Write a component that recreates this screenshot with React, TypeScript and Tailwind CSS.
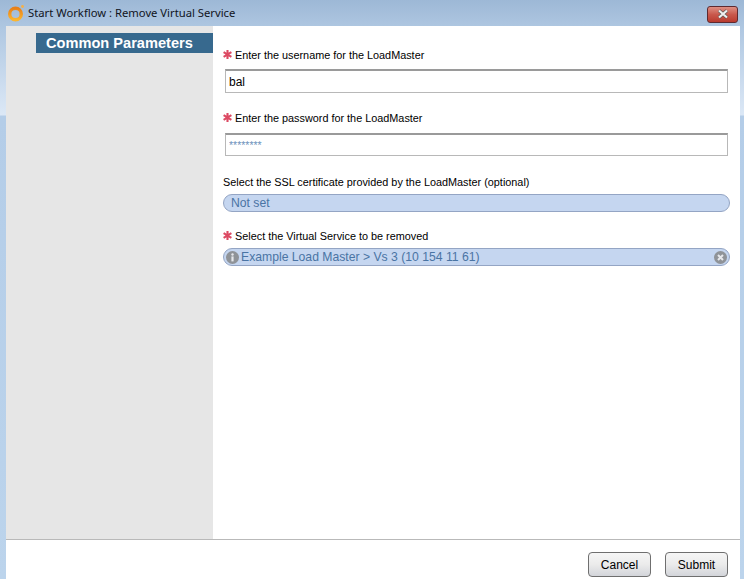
function Star() {
  return (
    <svg className="w-[9px] h-[9px] shrink-0 -mt-[2px]" viewBox="0 0 9 9" stroke="#dc4a63" strokeWidth="2.1">
      <path d="M4.5 0v9M0.6 2.2l7.8 4.6M8.4 2.2l-7.8 4.6" />
    </svg>
  );
}

function Label({ text, required }: { text: string; required?: boolean }) {
  return (
    <div className="flex items-center gap-[3px] h-[14px] text-[10.85px] text-black">
      {required && <Star />}
      <span>{text}</span>
    </div>
  );
}

function Pill({ value, filled }: { value: string; filled?: boolean }) {
  return (
    <div className="flex items-center h-[18px] w-[507px] rounded-[9px] border border-[#94a5c4] bg-[#c5d6f0] text-[12.2px] text-[#4a74a4]">
      {filled ? (
        <>
          <svg className="w-[13px] h-[13px] ml-[2px] shrink-0" viewBox="0 0 13 13">
            <circle cx="6.5" cy="6.5" r="6.5" fill="#8f9398" />
            <circle cx="6.5" cy="3.5" r="1.2" fill="#e6e8ec" />
            <rect x="5.4" y="5.4" width="2.2" height="5" fill="#e6e8ec" />
          </svg>
          <span className="ml-[2px] flex-1">{value}</span>
          <svg className="w-[13px] h-[13px] mr-[2px] shrink-0" viewBox="0 0 13 13">
            <circle cx="6.5" cy="6.5" r="6.5" fill="#8f9398" />
            <path d="M4 4l5 5M9 4l-5 5" stroke="#e6e8ec" strokeWidth="2" />
          </svg>
        </>
      ) : (
        <span className="ml-[7px]">{value}</span>
      )}
    </div>
  );
}

function Btn({ text }: { text: string }) {
  return (
    <button className="w-[63px] h-[25px] rounded-[4px] border border-[#6f6f6f] bg-gradient-to-b from-[#f6f6f6] via-[#ebebeb] to-[#d3d5da] text-[12px] text-black">
      {text}
    </button>
  );
}

export default function App() {
  return (
    <div className="w-[744px] h-[579px] overflow-hidden flex flex-col bg-[linear-gradient(180deg,#9db8d6_0px,#b0c8e2_30px,#dce8f6_115px,#b4cde8_116px,#bcd4ec_579px)] font-['Liberation_Sans',sans-serif]">
      {/* title bar */}
      <div className="h-[26px] shrink-0 flex items-center pl-[7px] pr-[6px]">
        <svg className="w-[18px] h-[18px] shrink-0" viewBox="0 0 18 18" fill="none">
          <defs>
            <linearGradient id="ring" x1="0" y1="0" x2="0" y2="1">
              <stop offset="0" stopColor="#e8801a" />
              <stop offset="1" stopColor="#fbb52e" />
            </linearGradient>
          </defs>
          <circle cx="8.5" cy="10" r="5.8" stroke="url(#ring)" strokeWidth="3.4" />
          <circle cx="15.5" cy="2.5" r="1.4" fill="#f7b045" />
        </svg>
        <span className="ml-[3px] font-['Noto_Sans',sans-serif] text-[11.25px] text-[#10141c]">
          Start Workflow : Remove Virtual Service
        </span>
        <div className="ml-auto mt-[2px] w-[31px] h-[17px] flex items-center justify-center rounded-[3px] border border-[#5e2a30] bg-gradient-to-b from-[#dd8f84] via-[#c9584c] to-[#b93a2e]">
          <svg className="w-[12px] h-[10px]" viewBox="0 0 12 10">
            <path d="M2 1.5l8 7M10 1.5l-8 7" stroke="#555" strokeWidth="3.4" />
            <path d="M2 1.5l8 7M10 1.5l-8 7" stroke="#f0f0f0" strokeWidth="2.2" />
          </svg>
        </div>
      </div>

      {/* window body */}
      <div className="flex-1 min-h-0 ml-[6px] mr-[4px] bg-white flex flex-col">
        <div className="h-[513px] shrink-0 flex">
          <div className="w-[207px] shrink-0 bg-[#e6e6e6] pt-[7px] pl-[30px]">
            <div className="h-[20px] bg-[#37698e] pl-[10px] pt-[2px] flex items-center text-[14.6px] font-bold text-white">
              Common Parameters
            </div>
          </div>
          <div className="flex-1 pl-[10px] pt-[22px]">
            <Label text="Enter the username for the LoadMaster" required />
            <input
              readOnly
              value="bal"
              className="block mt-[7px] ml-[2px] w-[503px] h-[24px] border border-[#b8b8b8] border-t-2 border-t-[#9a9a9a] pl-[3px] text-[12px] text-black outline-none"
            />
            <div className="h-[18px]" />
            <Label text="Enter the password for the LoadMaster" required />
            <input
              readOnly
              value="********"
              className="block mt-[8px] ml-[2px] w-[503px] h-[23px] border border-[#b8b8b8] border-t-2 border-t-[#9a9a9a] pl-[3px] text-[10.5px] text-[#6f93bd] outline-none"
            />
            <div className="h-[19px]" />
            <Label text="Select the SSL certificate provided by the LoadMaster (optional)" />
            <div className="h-[5px]" />
            <Pill value="Not set" />
            <div className="h-[17px]" />
            <Label text="Select the Virtual Service to be removed" required />
            <div className="h-[5px]" />
            <Pill value="Example Load Master > Vs 3 (10 154 11 61)" filled />
          </div>
        </div>
        <div className="flex-1 border-t border-[#b9b9b9] flex justify-end items-start gap-[14px] pt-[12px] pr-[12px]">
          <Btn text="Cancel" />
          <Btn text="Submit" />
        </div>
      </div>
    </div>
  );
}
